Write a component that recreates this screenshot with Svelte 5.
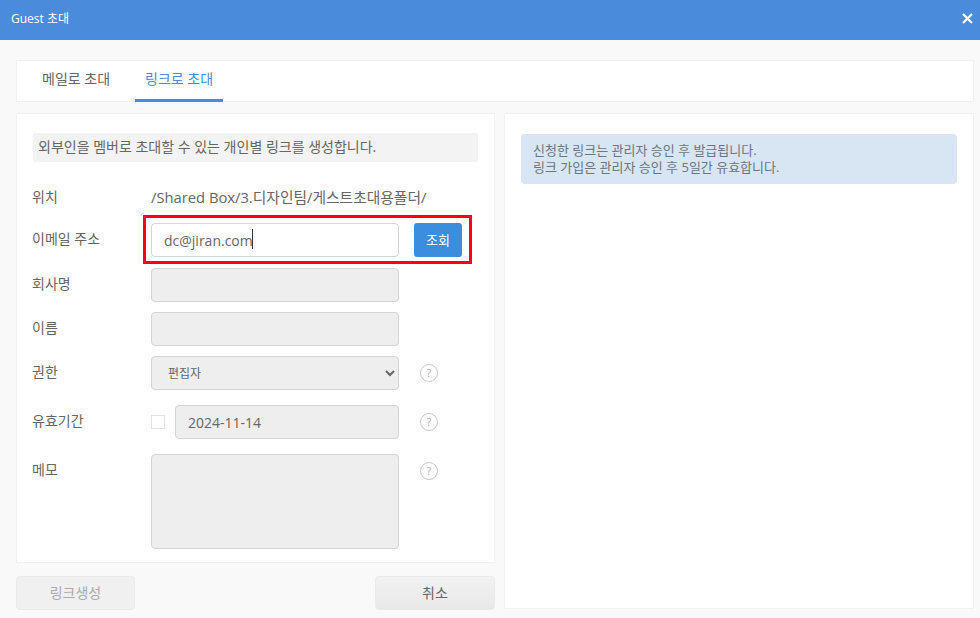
<script>
    let email = 'dc@jiran.com';
    let role = '편집자';
    let expire = '2024-11-14';
</script>

<div class="dialog">
    <header class="titlebar">
        <span>Guest 초대</span>
        <button class="close" aria-label="닫기">
            <svg width="11" height="11" viewBox="0 0 11 11"><path d="M1 1l9 9M10 1l-9 9" stroke="#fff" stroke-width="2.2" fill="none"/></svg>
        </button>
    </header>

    <div class="body">
        <nav class="tabs">
            <a class="tab">메일로 초대</a>
            <a class="tab active">링크로 초대</a>
        </nav>

        <div class="columns">
            <div class="left">
                <section class="panel form">
                    <p class="intro">외부인을 멤버로 초대할 수 있는 개인별 링크를 생성합니다.</p>

                    <div class="row path">
                        <label>위치</label>
                        <span>/Shared Box/3.디자인팀/게스트초대용폴더/</span>
                    </div>

                    <div class="row email">
                        <label>이메일 주소</label>
                        <input class="input" type="text" bind:value={email} />
                        <button class="lookup">조회</button>
                        <i class="caret"></i>
                        <div class="highlight"></div>
                    </div>

                    <div class="row company">
                        <label>회사명</label>
                        <input class="input" type="text" disabled />
                    </div>

                    <div class="row name">
                        <label>이름</label>
                        <input class="input" type="text" disabled />
                    </div>

                    <div class="row role">
                        <label>권한</label>
                        <select class="input" bind:value={role}>
                            <option>편집자</option>
                            <option>뷰어</option>
                        </select>
                        <span class="help">?</span>
                    </div>

                    <div class="row expire">
                        <label>유효기간</label>
                        <div class="date">
                            <input class="check" type="checkbox" />
                            <input class="input" type="text" disabled bind:value={expire} />
                        </div>
                        <span class="help">?</span>
                    </div>

                    <div class="row memo">
                        <label>메모</label>
                        <textarea class="input" disabled></textarea>
                        <span class="help">?</span>
                    </div>
                </section>

                <div class="actions">
                    <button class="btn create" disabled>링크생성</button>
                    <button class="btn cancel">취소</button>
                </div>
            </div>

            <section class="panel side">
                <div class="notice">
                    신청한 링크는 관리자 승인 후 발급됩니다.<br />
                    링크 가입은 관리자 승인 후 5일간 유효합니다.
                </div>
            </section>
        </div>
    </div>
</div>

<style>
    :global(body) {
        margin: 0;
        background: #f9f9f9;
    }

    .dialog {
        width: 980px;
        height: 618px;
        overflow: hidden;
        font-family: "Open Sans", "Noto Sans CJK KR", sans-serif;
        font-size: 14px;
        color: #666;
    }

    .titlebar {
        height: 40px;
        box-sizing: border-box;
        display: flex;
        align-items: center;
        justify-content: space-between;
        padding: 0 7px 4px 11px;
        background: #4a8cdb;
        color: #fff;
        font-size: 12px;
    }

    .close {
        display: flex;
        padding: 0;
        border: none;
        background: none;
    }

    .body {
        padding: 20px 6px 0 16px;
    }

    .tabs {
        height: 42px;
        box-sizing: border-box;
        display: flex;
        gap: 15px;
        padding-left: 15px;
        background: #fff;
        border: 1px solid #f2f2f2;
    }

    .tab {
        padding: 0 10px;
        line-height: 36px;
        height: 41px;
        box-sizing: border-box;
        color: #666;
    }

    .tab.active {
        color: #4a8cdb;
        border-bottom: 3px solid #4a8cdb;
    }

    .columns {
        display: flex;
        gap: 9px;
        margin-top: 11px;
    }

    .left {
        width: 479px;
    }

    .panel {
        box-sizing: border-box;
        background: #fff;
        border: 1px solid #f2f2f2;
    }

    .form {
        height: 450px;
        padding: 19px 16px 0 15px;
    }

    .intro {
        height: 29px;
        margin: 0 0 0 1px;
        padding-left: 5px;
        line-height: 27px;
        background: #f3f3f3;
        border-radius: 2px;
    }

    .row {
        position: relative;
        display: grid;
        grid-template-columns: 119px 248px auto;
        align-items: start;
    }

    .row label {
        line-height: 32px;
    }

    .path {
        margin-top: 20px;
        line-height: 30px;
    }

    .path label {
        line-height: 30px;
    }

    .path span {
        grid-column: 2 / 4;
        font-size: 14.75px;
    }

    .email {
        margin-top: 11px;
        grid-template-columns: 119px 248px 48px;
        column-gap: 0;
    }

    .company {
        margin-top: 11px;
    }

    .name,
    .role {
        margin-top: 10px;
    }

    .expire {
        margin-top: 15px;
    }

    .memo {
        margin-top: 15px;
    }

    .input {
        box-sizing: border-box;
        width: 100%;
        height: 34px;
        margin: 0;
        padding: 0 12px;
        font: inherit;
        color: #666;
        background: #eee;
        border: 1px solid #d5d5d5;
        border-radius: 4px;
        outline: none;
    }

    .email .input {
        background: #fff;
        font-size: 14px;
    }

    select.input {
        padding-left: 12px;
        font-size: 12px;
    }

    .expire .input {
        flex: 1;
        width: auto;
        min-width: 0;
        font-size: 14px;
    }

    textarea.input {
        height: 95px;
        display: block;
        resize: none;
    }

    .lookup {
        margin-left: 15px;
        width: 48px;
        height: 34px;
        padding: 0 0 2px;
        font: inherit;
        font-size: 13px;
        color: #fff;
        background: #3b8ede;
        border: none;
        border-radius: 3px;
    }

    .caret {
        position: absolute;
        left: 220px;
        top: 6px;
        width: 1px;
        height: 20px;
        background: #333;
    }

    .highlight {
        position: absolute;
        left: 111px;
        top: -8px;
        width: 329px;
        height: 49px;
        box-sizing: border-box;
        border: 3px solid #f00;
        pointer-events: none;
    }

    .date {
        display: flex;
        align-items: center;
        gap: 10px;
    }

    .check {
        appearance: none;
        width: 14px;
        height: 14px;
        margin: 0;
        background: #fff;
        border: 1px solid #e2e2e2;
    }

    .help {
        width: 18px;
        height: 18px;
        margin: 8px 0 0 21px;
        box-sizing: border-box;
        display: flex;
        align-items: center;
        justify-content: center;
        font-size: 10px;
        color: #aaa;
        border: 1px solid #c8c8c8;
        border-radius: 50%;
    }

    .actions {
        display: flex;
        justify-content: space-between;
        margin-top: 13px;
    }

    .btn {
        height: 34px;
        padding: 0 0 2px;
        font: inherit;
        border: 1px solid #eaeaea;
        border-radius: 4px;
    }

    .create {
        width: 119px;
        color: #aaa;
        background: #f0f0f0;
    }

    .cancel {
        width: 120px;
        color: #666;
        background: linear-gradient(#f2f2f2, #e8e8e8);
    }

    .side {
        width: 470px;
        height: 496px;
        padding: 20px 16px;
    }

    .notice {
        height: 50px;
        box-sizing: border-box;
        padding: 8px 12px;
        font-size: 13px;
        line-height: 17px;
        color: #6b7680;
        background: #d8e5f3;
        border-radius: 4px;
    }
</style>
